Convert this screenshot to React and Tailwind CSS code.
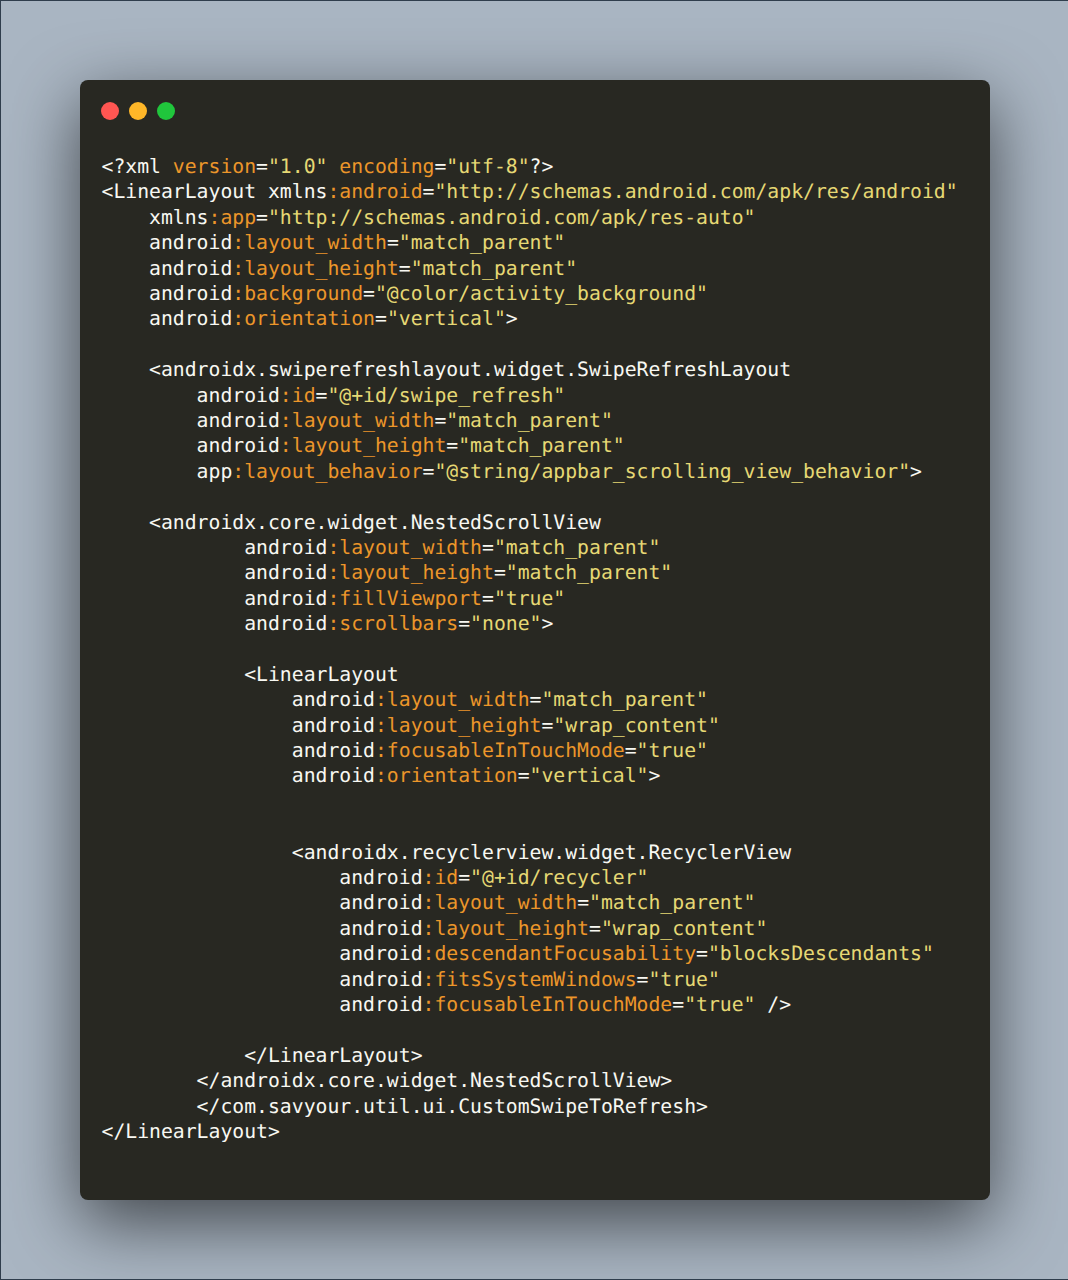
import React from "react";

const code = `<?xml version="1.0" encoding="utf-8"?>
<LinearLayout xmlns:android="http://schemas.android.com/apk/res/android"
    xmlns:app="http://schemas.android.com/apk/res-auto"
    android:layout_width="match_parent"
    android:layout_height="match_parent"
    android:background="@color/activity_background"
    android:orientation="vertical">

    <androidx.swiperefreshlayout.widget.SwipeRefreshLayout
        android:id="@+id/swipe_refresh"
        android:layout_width="match_parent"
        android:layout_height="match_parent"
        app:layout_behavior="@string/appbar_scrolling_view_behavior">

    <androidx.core.widget.NestedScrollView
            android:layout_width="match_parent"
            android:layout_height="match_parent"
            android:fillViewport="true"
            android:scrollbars="none">

            <LinearLayout
                android:layout_width="match_parent"
                android:layout_height="wrap_content"
                android:focusableInTouchMode="true"
                android:orientation="vertical">


                <androidx.recyclerview.widget.RecyclerView
                    android:id="@+id/recycler"
                    android:layout_width="match_parent"
                    android:layout_height="wrap_content"
                    android:descendantFocusability="blocksDescendants"
                    android:fitsSystemWindows="true"
                    android:focusableInTouchMode="true" />

            </LinearLayout>
        </androidx.core.widget.NestedScrollView>
        </com.savyour.util.ui.CustomSwipeToRefresh>
</LinearLayout>`;

// splits a line into plain text, attribute names and quoted values
const Line = ({ text }) => {
  const parts = text.split(/(:?[\w]+(?==")|"[^"]*")/g);
  return (
    <div className="h-[25.4px] leading-[25.4px] whitespace-pre">
      {parts.map((part, i) => {
        if (part.startsWith('"')) {
          return (
            <span key={i} className="text-[#e6d874]">
              {part}
            </span>
          );
        }
        if (/^:?\w+$/.test(part) && /=|"/.test(parts[i + 1]?.[0] || "")) {
          return (
            <span key={i} className="text-[#ec962a]">
              {part}
            </span>
          );
        }
        return <span key={i}>{part}</span>;
      })}
    </div>
  );
};

const App = () => {
  return (
    <div className="h-[1280px] w-full overflow-hidden border-y border-l border-[#2f3d4c] bg-[#a9b5c2] pl-[79px] pt-[79px]">
      <div className="h-[1120px] w-[910px] rounded-lg bg-[#282822] pl-[21px] pt-[22px] shadow-[0_22px_70px_rgba(0,0,0,0.62)]">
        {/* Window buttons */}
        <div className="flex gap-[10.5px]">
          <div className="h-[17.5px] w-[17.5px] rounded-full bg-[#ff5652]" />
          <div className="h-[17.5px] w-[17.5px] rounded-full bg-[#ffb728]" />
          <div className="h-[17.5px] w-[17.5px] rounded-full bg-[#20c63c]" />
        </div>

        {/* Code */}
        <div className="ml-[0.5px] mt-[34.6px] font-['DejaVu_Sans_Mono',monospace] text-[19.76px] text-[#f8f8f2] [text-rendering:geometricPrecision]">
          {code.split("\n").map((line, i) => (
            <Line key={i} text={line} />
          ))}
        </div>
      </div>
    </div>
  );
};

export default App;
